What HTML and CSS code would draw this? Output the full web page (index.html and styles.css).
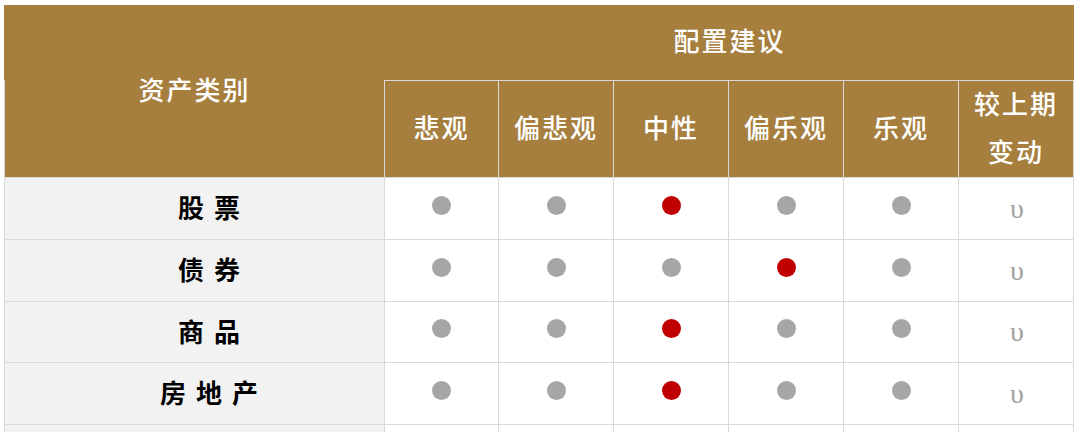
FILE: index.html
```html
<!DOCTYPE html>
<html lang="zh-CN">
<head>
<meta charset="utf-8">
<title>配置建议</title>
<link rel="stylesheet" href="styles.css">
</head>
<body>
<div class="page">
  <div class="grid">
    <div class="hd hd-cat">资产类别</div>
    <div class="hd hd-group">配置建议</div>
    <div class="hd hd-sub">悲观</div>
    <div class="hd hd-sub">偏悲观</div>
    <div class="hd hd-sub">中性</div>
    <div class="hd hd-sub">偏乐观</div>
    <div class="hd hd-sub">乐观</div>
    <div class="hd hd-sub hd-two">较上期<br>变动</div>

    <div class="cell name">股 票</div>
    <div class="cell"><span class="dot"></span></div>
    <div class="cell"><span class="dot"></span></div>
    <div class="cell"><span class="dot on"></span></div>
    <div class="cell"><span class="dot"></span></div>
    <div class="cell"><span class="dot"></span></div>
    <div class="cell chg">υ</div>

    <div class="cell name">债 券</div>
    <div class="cell"><span class="dot"></span></div>
    <div class="cell"><span class="dot"></span></div>
    <div class="cell"><span class="dot"></span></div>
    <div class="cell"><span class="dot on"></span></div>
    <div class="cell"><span class="dot"></span></div>
    <div class="cell chg">υ</div>

    <div class="cell name">商 品</div>
    <div class="cell"><span class="dot"></span></div>
    <div class="cell"><span class="dot"></span></div>
    <div class="cell"><span class="dot on"></span></div>
    <div class="cell"><span class="dot"></span></div>
    <div class="cell"><span class="dot"></span></div>
    <div class="cell chg">υ</div>

    <div class="cell name">房 地 产</div>
    <div class="cell"><span class="dot"></span></div>
    <div class="cell"><span class="dot"></span></div>
    <div class="cell"><span class="dot on"></span></div>
    <div class="cell"><span class="dot"></span></div>
    <div class="cell"><span class="dot"></span></div>
    <div class="cell chg">υ</div>

    <div class="cell name"></div>
    <div class="cell"></div>
    <div class="cell"></div>
    <div class="cell"></div>
    <div class="cell"></div>
    <div class="cell"></div>
    <div class="cell"></div>
  </div>
</div>
</body>
</html>
```

FILE: styles.css
```css
* { box-sizing: border-box; }
html, body { margin: 0; padding: 0; background: #ffffff; }
body { font-family: "Noto Sans CJK SC", "Noto Sans", sans-serif; }

.page {
  padding: 5px 0 0 4px;
  height: 432px;
  overflow: hidden;
}

.grid {
  display: grid;
  grid-template-columns: 381px 114px repeat(5, 115px);
  grid-template-rows: 76px 97px 62px 62px 61px 62px 62px;
}

.hd {
  background: #a67f3f;
  color: #ffffff;
  font-size: 26px;
  font-weight: 500;
  letter-spacing: 2px;
  display: flex;
  align-items: center;
  justify-content: center;
  text-align: center;
  padding-bottom: 6px;
}

.hd-cat {
  grid-row: 1 / 3;
  grid-column: 1;
  border-bottom: 1px solid #d9d9d9;
  background:
    linear-gradient(#d9d9d9, #d9d9d9) right bottom / 1px 97px no-repeat,
    linear-gradient(#d9d9d9, #d9d9d9) left bottom / 1px 97px no-repeat,
    #a67f3f;
}

.hd-group {
  grid-column: 2 / -1;
  grid-row: 1;
  border-bottom: 1px solid #d9d9d9;
}

.hd-sub {
  border-right: 1px solid #d9d9d9;
  border-bottom: 1px solid #d9d9d9;
}

.hd-two { line-height: 48px; padding-bottom: 4px; }

.cell {
  background: #ffffff;
  border-right: 1px solid #d9d9d9;
  border-bottom: 1px solid #d9d9d9;
  display: flex;
  align-items: center;
  justify-content: center;
}

.name {
  background: #f2f2f2;
  border-left: 1px solid #d9d9d9;
  font-size: 26px;
  font-weight: 700;
  color: #000000;
  letter-spacing: 2px;
  padding-left: 31px;
  padding-bottom: 4px;
}

.dot {
  display: block;
  width: 19px;
  height: 19px;
  border-radius: 50%;
  background: #a6a6a6;
  margin-bottom: 7px;
}
.dot.on { background: #c00000; }

.chg {
  font-family: "Liberation Serif", "DejaVu Serif", serif;
  font-size: 28px;
  color: #a0a0a0;
  padding-left: 2px;
}
```
